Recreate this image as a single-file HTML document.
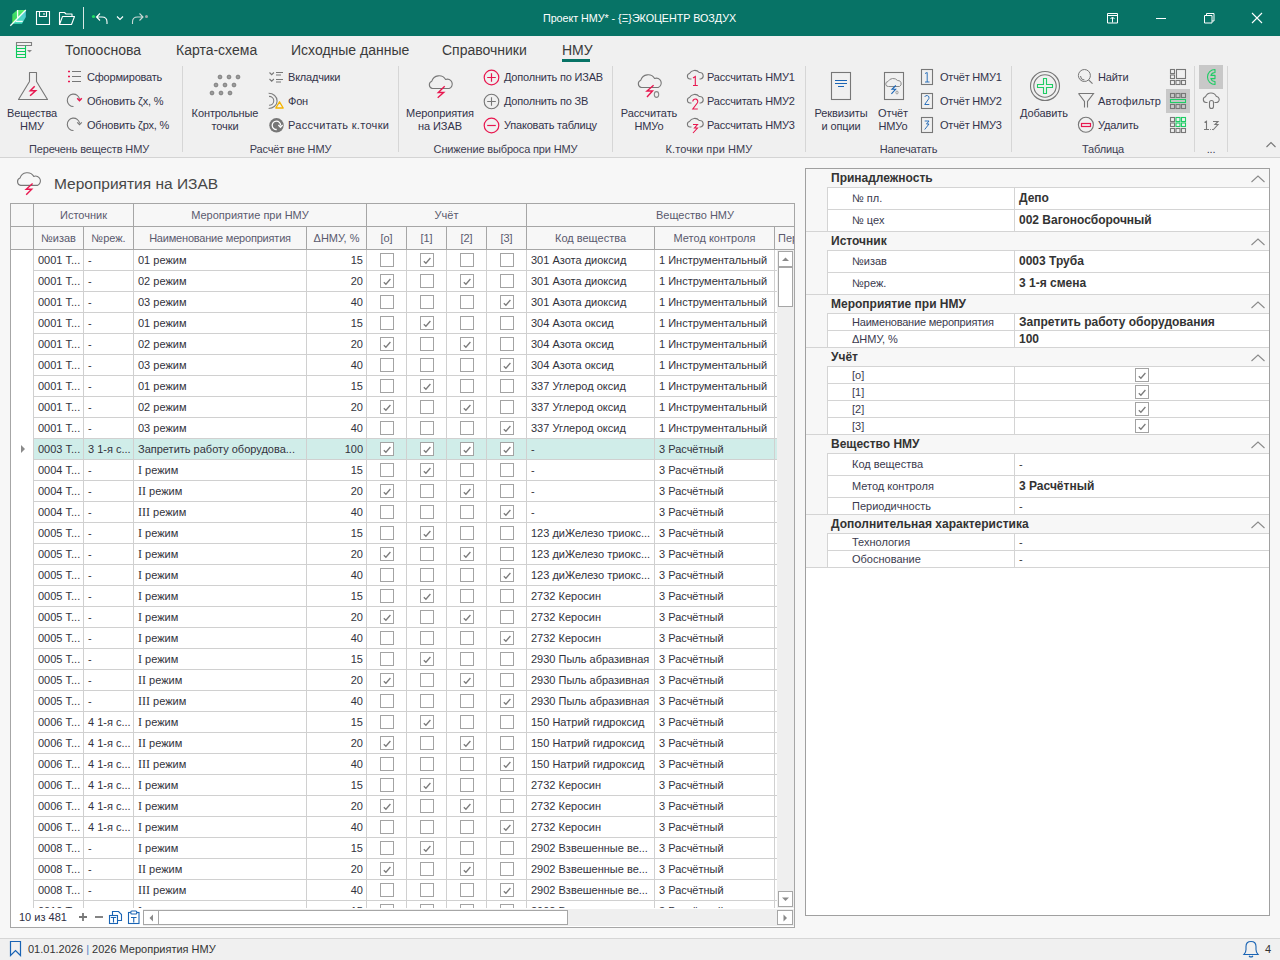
<!DOCTYPE html>
<html><head><meta charset="utf-8">
<style>
*{box-sizing:border-box;margin:0;padding:0}
html,body{width:1280px;height:960px;overflow:hidden}
body{position:relative;background:#f7f7f7;font-family:"Liberation Sans",sans-serif;font-size:11px;color:#333}
.a{position:absolute;white-space:nowrap}
#tb{position:absolute;left:0;top:0;width:1280px;height:36px;background:#077366}
#rib{position:absolute;left:0;top:36px;width:1280px;height:122px;background:#f0f0f0;border-bottom:1px solid #d4d4d4}
.tab{position:absolute;top:6px;font-size:14px;color:#3b3b3b}
.sep{position:absolute;top:30px;width:1px;height:86px;background:#d6d6d6}
.cap{position:absolute;top:107px;color:#3c3c50;text-align:center;letter-spacing:-0.15px}
.sb{position:absolute;color:#33334a;letter-spacing:-0.2px}
.lb{position:absolute;color:#33334a;text-align:center;line-height:13px;letter-spacing:-0.1px}
svg{position:absolute;overflow:visible}
</style></head><body>
<div id="tb">
<svg style="left:0;top:0" width="160" height="36" viewBox="0 0 160 36">
 <defs><linearGradient id="lg" x1="0" y1="1" x2="0.6" y2="0"><stop offset="0" stop-color="#5ee23a"/><stop offset="0.5" stop-color="#3ad968"/><stop offset="1" stop-color="#56ee6a"/></linearGradient><linearGradient id="lg2" x1="0" y1="1" x2="1" y2="0"><stop offset="0" stop-color="#46e8b8"/><stop offset="1" stop-color="#55c8d8"/></linearGradient></defs>
 <polygon points="12.3,14.3 17.3,10 25.8,10 12.3,23.6" fill="url(#lg)"/>
 <polygon points="25.8,10 25.8,17 22,23.8 12.6,23.8" fill="url(#lg2)"/>
 <path d="M10.3 25.7 L25.8 10 M17.6 10 V17.8 M15.8 21.4 H22.7" stroke="#f4fff8" stroke-width="1.3" fill="none"/>
 <path d="M36.5 11.5 h13 v13 h-13 z M39.5 11.5 v5 h7 v-5 M44 13 v2" stroke="#fff" stroke-width="1.1" fill="none"/>
 <path d="M59.5 24.5 v-12 h5 l1.5 1.5 h6 v2 M59.5 24.5 l3 -8 h12 l-3 8 z" stroke="#fff" stroke-width="1.1" fill="none" stroke-linejoin="round"/>
 <path d="M83.5 7 v22" stroke="#d8e8e4" stroke-width="1"/>
 <circle cx="93.5" cy="16.5" r="1.6" fill="#22dd66"/>
 <path d="M107 24 v-2 q0 -5 -5 -5 h-5 M100 13.5 l-3.5 3.5 l3.5 3.5" stroke="#fff" stroke-width="1.1" fill="none"/>
 <path d="M117 16.5 l3 3 l3 -3" stroke="#fff" stroke-width="1.1" fill="none"/>
 <path d="M132.5 24 v-2 q0 -5 5 -5 h5 M139.5 13.5 l3.5 3.5 l-3.5 3.5" stroke="#c9d9d6" stroke-width="1.1" fill="none"/>
 <circle cx="146.5" cy="16.5" r="1.5" fill="#a0acaa"/>
</svg>
<div class="a" style="left:543px;top:12px;font-size:10.8px;letter-spacing:-0.08px;color:#fff">Проект НМУ* - {Ξ}ЭКОЦЕНТР ВОЗДУХ</div>
<svg style="left:1100px;top:0" width="180" height="36" viewBox="1100 0 180 36">
 <path d="M1107.5 13.5 h10 v9.5 h-10 z M1107.5 15.5 h10 M1112.5 22.5 v-5 M1110.5 19 l2 -2 l2 2" stroke="#fff" stroke-width="1" fill="none"/>
 <path d="M1156 18.5 h10" stroke="#fff" stroke-width="1"/>
 <path d="M1204.5 15.5 h7.5 v7.5 h-7.5 z M1206.5 15.5 v-2 h7.5 v7.5 h-2" stroke="#fff" stroke-width="1" fill="none"/>
 <path d="M1252 13 l10 10 M1262 13 l-10 10" stroke="#fff" stroke-width="1.1"/>
</svg>
</div>
<div id="rib">
<svg style="left:0;top:0" width="40" height="30" viewBox="0 36 40 30">
 <path d="M16.5 42.5 h15 v3 h-15 z" stroke="#808080" fill="none" stroke-width="1.1"/>
 <path d="M16.5 45.5 V57.5 H25.5 V45.5 M16.5 48.5 H25.5 M16.5 51.5 H25.5 M16.5 54.5 H25.5" stroke="#0ccb5c" fill="none" stroke-width="1.1"/>
 <path d="M27 50 h5 l-2.5 2.5 z" fill="#8a8a8a"/>
</svg>
<div class="tab" style="left:65px">Топооснова</div>
<div class="tab" style="left:176px">Карта-схема</div>
<div class="tab" style="left:291px">Исходные данные</div>
<div class="tab" style="left:442px">Справочники</div>
<div class="tab" style="left:562px">НМУ</div>
<div class="a" style="left:562px;top:23px;width:28px;height:3px;background:#077366"></div>

<div class="sep" style="left:182px"></div>
<div class="sep" style="left:398px"></div>
<div class="sep" style="left:612px"></div>
<div class="sep" style="left:805px"></div>
<div class="sep" style="left:1011px"></div>
<div class="sep" style="left:1194px"></div>
<div class="sep" style="left:1227px"></div>

<!-- group 1 -->
<div class="lb" style="left:2px;top:71px;width:60px">Вещества<br>НМУ</div>
<div class="sb" style="left:87px;top:35px">Сформировать</div>
<div class="sb" style="left:87px;top:59px">Обновить ζх, %</div>
<div class="sb" style="left:87px;top:83px">Обновить ζрх, %</div>
<div class="cap" style="left:-2px;width:182px">Перечень веществ НМУ</div>
<!-- group 2 -->
<div class="lb" style="left:185px;top:71px;width:80px">Контрольные<br>точки</div>
<div class="sb" style="left:288px;top:35px">Вкладчики</div>
<div class="sb" style="left:288px;top:59px">Фон</div>
<div class="sb" style="left:288px;top:83px;letter-spacing:0.3px">Рассчитать к.точки</div>
<div class="cap" style="left:183px;width:215px">Расчёт вне НМУ</div>
<!-- group 3 -->
<div class="lb" style="left:400px;top:71px;width:80px">Мероприятия<br>на ИЗАВ</div>
<div class="sb" style="left:504px;top:35px">Дополнить по ИЗАВ</div>
<div class="sb" style="left:504px;top:59px">Дополнить по ЗВ</div>
<div class="sb" style="left:504px;top:83px">Упаковать таблицу</div>
<div class="cap" style="left:399px;width:213px">Снижение выброса при НМУ</div>
<!-- group 4 -->
<div class="lb" style="left:609px;top:71px;width:80px">Рассчитать<br>НМУо</div>
<div class="sb" style="left:707px;top:35px">Рассчитать НМУ1</div>
<div class="sb" style="left:707px;top:59px">Рассчитать НМУ2</div>
<div class="sb" style="left:707px;top:83px">Рассчитать НМУ3</div>
<div class="cap" style="left:613px;width:192px;letter-spacing:0.1px">К.точки при НМУ</div>
<!-- group 5 -->
<div class="lb" style="left:806px;top:71px;width:70px">Реквизиты<br>и опции</div>
<div class="lb" style="left:873px;top:71px;width:40px">Отчёт<br>НМУо</div>
<div class="sb" style="left:940px;top:35px">Отчёт НМУ1</div>
<div class="sb" style="left:940px;top:59px">Отчёт НМУ2</div>
<div class="sb" style="left:940px;top:83px">Отчёт НМУ3</div>
<div class="cap" style="left:806px;width:205px">Напечатать</div>
<!-- group 6 -->
<div class="lb" style="left:1014px;top:71px;width:60px">Добавить</div>
<div class="sb" style="left:1098px;top:35px">Найти</div>
<div class="sb" style="left:1098px;top:59px;letter-spacing:0.15px">Автофильтр</div>
<div class="sb" style="left:1098px;top:83px">Удалить</div>
<div class="cap" style="left:1012px;width:182px">Таблица</div>
<!-- group 7 -->
<div class="cap" style="left:1195px;width:32px">...</div>
</div>
<svg style="left:0;top:0" width="1280" height="160" viewBox="0 0 1280 160" fill="none" stroke-width="1">
<g stroke="#777">
 <!-- flask -->
 <path d="M29.5 81.5 V72.5 H36.5 V81.5 L47.5 99.5 H18.5 L29.5 81.5" stroke-width="1.1" stroke-linejoin="round"/>
 <!-- list -->
 <path d="M72 71.5 h9 M72 76.5 h9 M72 81.5 h9" stroke-width="1.1"/>
 <!-- refresh arcs -->
 <path d="M73.5 106.5 A6.2 6.2 0 1 1 79.6 99.3" stroke-width="1.1"/>
 <path d="M73.5 130.5 A6.2 6.2 0 1 1 79.6 123.3" stroke-width="1.1"/>
 <path d="M77.2 122.3 L79.5 124.6 L81.8 122.3" stroke-width="1.1"/>
 <!-- vkladchiki -->
 <path d="M269.5 72.5 l2.2 2.2 l2.2 -2.2 M269.5 79 l2.2 2.2 l2.2 -2.2 M276 72.5 h7 M276 75 h5 M276 79.5 h7 M276 82 h5" stroke-width="1.1"/>
 <!-- fon moon -->
 <path d="M268.6 93.3 A8.5 7.6 0 0 1 268.6 108.5" stroke="#7f7f7f" stroke-width="1.1"/>
 <path d="M269 96.4 A4.7 4.4 0 0 1 269 105.3" stroke="#7f7f7f" stroke-width="1.1"/>
 <!-- search -->
 <circle cx="1084.4" cy="75.5" r="6"/>
 <path d="M1080.5 76 a4 4 0 0 0 4 4" />
 <path d="M1088.6 79.8 L1092.5 83.6" stroke-width="1.1"/>
 <!-- funnel -->
 <path d="M1078.5 93.5 H1093.5 L1087.5 101.5 V107.5 M1084.5 107.5 V101.5 L1078.5 93.5" stroke-width="1.1"/>
 <!-- delete circle -->
 <circle cx="1085.9" cy="124.8" r="7.5" stroke-width="1.1"/>
 <!-- add circles -->
 <circle cx="1045" cy="86" r="14.5" stroke-width="1.1"/>
 <circle cx="1045" cy="86" r="11.2" stroke-width="1.1"/>
 <!-- plus circles gray -->
 <circle cx="491.5" cy="101.5" r="7.3" stroke-width="1.1"/>
 <path d="M487.2 101.5 h8.6 M491.5 97.2 v8.6" stroke-width="1.1"/>
 <!-- clouds -->
 <path d="M432.5 88.5 A3.8 3.8 0 0 1 431.8 81.2 A7.6 7.6 0 0 1 445.6 79.5 A4.6 4.6 0 0 1 449.2 88.5 Z" stroke-width="1.1" stroke-linejoin="round"/>
 <path d="M641.5 87.5 A3.8 3.8 0 0 1 640.8 80.2 A7.6 7.6 0 0 1 654.6 78.5 A4.6 4.6 0 0 1 658.2 87.5 Z" stroke-width="1.1" stroke-linejoin="round"/>
 <ellipse cx="656.5" cy="94.5" rx="2.2" ry="2.9" stroke="#888" stroke-width="1.1"/>
 <!-- small clouds x3 -->
 <path d="M691.5 79 h-1.5 A2.8 2.8 0 0 1 689.5 73.5 A5.9 5.9 0 0 1 699.2 72.5 A3.3 3.3 0 0 1 700.5 79 h-1" stroke-width="1.1"/>
 <path d="M691.5 103 h-1.5 A2.8 2.8 0 0 1 689.5 97.5 A5.9 5.9 0 0 1 699.2 96.5 A3.3 3.3 0 0 1 700.5 103 h-1" stroke-width="1.1"/>
 <path d="M691.5 127 h-1.5 A2.8 2.8 0 0 1 689.5 121.5 A5.9 5.9 0 0 1 699.2 120.5 A3.3 3.3 0 0 1 700.5 127 h-1" stroke-width="1.1"/>
 <!-- doc icons -->
 <rect x="831.5" y="72.5" width="19" height="27" stroke-width="1.1"/>
 <rect x="884.5" y="72.5" width="19" height="27" stroke-width="1.1"/>
 <path d="M888.5 86.5 A2.5 2.5 0 0 1 888 81.5 A5.9 5.9 0 0 1 897.6 80.5 A3.2 3.2 0 0 1 899.5 86.5 Z" stroke="#8a8a8a" stroke-width="1"/>
 <rect x="921.5" y="69.5" width="11" height="15" stroke-width="1.1"/>
 <rect x="921.5" y="93.5" width="11" height="15" stroke-width="1.1"/>
 <rect x="921.5" y="117.5" width="11" height="15" stroke-width="1.1"/>
</g>
<g fill="#9a9a9a" stroke="#7a7a7a" stroke-width="0.9">
 <circle cx="220" cy="77" r="1.9"/><circle cx="229" cy="77" r="1.9"/><circle cx="238" cy="77" r="1.9"/>
 <circle cx="216" cy="85" r="1.9"/><circle cx="225" cy="85" r="1.9"/><circle cx="234" cy="85" r="1.9"/>
 <circle cx="212" cy="93" r="1.9"/><circle cx="221" cy="93" r="1.9"/><circle cx="230" cy="93" r="1.9"/>
</g>
<g fill="#777">
 <circle cx="276.5" cy="125.3" r="7.2"/>
</g>
<path d="M276.7 129.5 A4.2 4.2 0 1 1 280.6 125.4" stroke="#fff" stroke-width="1.3"/>
<path d="M278.4 125 L280.5 127.2 L282.6 125" stroke="#fff" stroke-width="1.3"/>
<g stroke="#e8174f">
 <path d="M34.7 86.3 L30.3 90.7 H35.6 L30.1 95.7" stroke-width="1.5"/>
 <path d="M68 71.5 h2 M68 76.5 h2 M68 81.5 h2" stroke-width="1.5"/>
 <path d="M77.2 98.3 L79.5 100.6 L81.8 98.3" stroke-width="1.5"/>
 <circle cx="491.5" cy="77.5" r="7.3" stroke-width="1.2"/>
 <path d="M487.2 77.5 h8.6 M491.5 73.2 v8.6" stroke-width="1.2"/>
 <circle cx="491.5" cy="125.5" r="7.3" stroke-width="1.2"/>
 <path d="M487.2 125.5 h8.6" stroke-width="1.2"/>
 <path d="M444.7 86.3 L438.3 92.5 H443.7 L437.7 97.8" stroke-width="1.4"/>
 <path d="M653.6 85.3 L647 91 H652.5 L647 97" stroke-width="1.4"/>
 <path d="M693 78 l2.3 -1.5 v8.5 M693 85.5 h4.8" stroke-width="1.1"/>
 <path d="M692.8 101.5 a2.5 2.5 0 1 1 4.5 1.5 l-4.5 6 h5" stroke-width="1.1"/>
 <path d="M693 124.5 h4.5 l-3 3.5 h3 l-4.5 5" stroke-width="1.1"/>
 <rect x="1081.5" y="123.5" width="9" height="3" stroke-width="1.2"/>
</g>
<path d="M275.8 108 L279.5 101.8 L283.2 108 Z" stroke="#f5b400" stroke-width="1.3" stroke-linejoin="round"/>
<g stroke="#1a64b4">
 <path d="M835 80.5 h12 M835 83.5 h12 M838 86.5 h6" stroke-width="1.1"/>
 <path d="M895.8 85.5 l-3.8 3.8 h3.6 l-4.2 4.6" stroke-width="1.1"/>
 <ellipse cx="897" cy="92.5" rx="1.1" ry="1.5" stroke="#888" stroke-width="0.8"/>
 <path d="M925 73.5 l2.2 -1 v9.5 M925 82 h4.5" stroke-width="0.9"/>
 <path d="M924.7 97 a2.2 2.2 0 1 1 4.2 1.5 l-4.2 6 h4.6" stroke-width="0.9"/>
 <path d="M924.7 121 h4.3 l-2.5 3 h2.5 l-4.3 5.5" stroke-width="0.9"/>
</g>
<!-- add plus green -->
<path d="M1043.5 78.5 h3 v6 h6 v3 h-6 v6 h-3 v-6 h-6 v-3 h6 z" stroke="#1fcc64" stroke-width="1.1"/>
<!-- table right icons -->
<rect x="1166" y="89" width="24" height="24" fill="#c8c8c8"/>
<rect x="1199" y="65" width="24" height="24" fill="#c8c8c8"/>
<g stroke="#777" stroke-width="1.1">
 <rect x="1170.5" y="69.5" width="4" height="4"/><rect x="1170.5" y="75" width="4" height="3.5"/>
 <rect x="1176.5" y="69.5" width="9" height="9"/>
 <rect x="1170.5" y="80.5" width="4" height="4"/><rect x="1176" y="80.5" width="4" height="4"/><rect x="1181.5" y="80.5" width="4" height="4"/>
 <rect x="1170.5" y="93.5" width="4" height="4"/><rect x="1176" y="93.5" width="4" height="4"/><rect x="1181.5" y="93.5" width="4" height="4"/>
 <rect x="1170.5" y="104.5" width="4" height="4"/><rect x="1176" y="104.5" width="4" height="4"/><rect x="1181.5" y="104.5" width="4" height="4"/>
 <rect x="1170.5" y="117.5" width="4" height="4"/><rect x="1170.5" y="123" width="4" height="3.5"/>
 <rect x="1170.5" y="128.5" width="4" height="4"/><rect x="1176" y="128.5" width="4" height="4"/><rect x="1181.5" y="128.5" width="4" height="4"/>
 <rect x="1209.5" y="100.5" width="4" height="8" rx="2"/>
 <path d="M1207.5 102.5 h-1.5 A2.9 2.9 0 0 1 1205.5 96.8 A5.9 5.9 0 0 1 1216.4 96.5 A3 3 0 0 1 1216 102.5 h-1.5"/>
 <path d="M1204.5 122.5 l2 -1.2 v8 M1204 129.5 h5 M1210.2 129.5 h0.8 M1212 129.5 h0.8 M1213 121.5 h5 l-3 3 h3 l-5 5.5"/>
</g>
<g stroke="#1fcc64" stroke-width="1.1">
 <rect x="1170.5" y="99.5" width="15" height="3"/>
 <rect x="1176" y="117.5" width="4" height="4"/><rect x="1181.5" y="117.5" width="4" height="4"/>
 <rect x="1176" y="123" width="4" height="3.5"/><rect x="1181.5" y="123" width="4" height="3.5"/>
 <path d="M1215 69.5 A7.5 7.5 0 0 0 1215 84.5 V81.5 A4.5 4.5 0 0 1 1210.9 78.6 H1215 V75.4 H1210.9 A4.5 4.5 0 0 1 1215 72.5 Z" stroke-linejoin="round"/>
</g>
<path d="M1266.5 147 L1271 142.5 L1275.5 147" stroke="#777" stroke-width="1.1"/>
</svg>
<div class="a" style="left:10px;top:203px;width:785px;height:47px;background:#f7f7f7;border:1px solid #a6a6a6;border-bottom:none"></div>
<div class="a" style="left:11px;top:250px;width:783px;height:677px;background:#fff"></div>
<div class="a" style="left:10px;top:203px;width:785px;height:725px;border:1px solid #a6a6a6"></div>
<div class="a" style="left:11px;top:226px;width:783px;height:1px;background:#a6a6a6"></div>
<div class="a" style="left:11px;top:249px;width:783px;height:1px;background:#a6a6a6"></div>
<div class="a" style="left:33px;top:204px;width:1px;height:45px;background:#a6a6a6"></div>
<div class="a" style="left:133px;top:204px;width:1px;height:45px;background:#a6a6a6"></div>
<div class="a" style="left:366px;top:204px;width:1px;height:45px;background:#a6a6a6"></div>
<div class="a" style="left:526px;top:204px;width:1px;height:45px;background:#a6a6a6"></div>
<div class="a" style="left:83px;top:227px;width:1px;height:22px;background:#a6a6a6"></div>
<div class="a" style="left:306px;top:227px;width:1px;height:22px;background:#a6a6a6"></div>
<div class="a" style="left:406px;top:227px;width:1px;height:22px;background:#a6a6a6"></div>
<div class="a" style="left:446px;top:227px;width:1px;height:22px;background:#a6a6a6"></div>
<div class="a" style="left:486px;top:227px;width:1px;height:22px;background:#a6a6a6"></div>
<div class="a" style="left:654px;top:227px;width:1px;height:22px;background:#a6a6a6"></div>
<div class="a" style="left:774px;top:227px;width:1px;height:22px;background:#a6a6a6"></div>
<div class="a" style="left:34px;top:204px;width:99px;color:#5a5a6e;text-align:center;line-height:22px">Источник</div>
<div class="a" style="left:134px;top:204px;width:232px;color:#5a5a6e;text-align:center;line-height:22px">Мероприятие при НМУ</div>
<div class="a" style="left:367px;top:204px;width:159px;color:#5a5a6e;text-align:center;line-height:22px">Учёт</div>
<div class="a" style="left:595px;top:204px;width:200px;color:#5a5a6e;text-align:center;line-height:22px">Вещество НМУ</div>
<div class="a" style="left:34px;top:227px;width:49px;color:#5a5a6e;text-align:center;line-height:22px">№изав</div>
<div class="a" style="left:84px;top:227px;width:49px;color:#5a5a6e;text-align:center;line-height:22px">№реж.</div>
<div class="a" style="left:134px;top:227px;width:172px;letter-spacing:-0.2px;color:#5a5a6e;text-align:center;line-height:22px">Наименование мероприятия</div>
<div class="a" style="left:307px;top:227px;width:59px;color:#5a5a6e;text-align:center;line-height:22px">ΔНМУ, %</div>
<div class="a" style="left:367px;top:227px;width:39px;color:#5a5a6e;text-align:center;line-height:22px">[o]</div>
<div class="a" style="left:407px;top:227px;width:39px;color:#5a5a6e;text-align:center;line-height:22px">[1]</div>
<div class="a" style="left:447px;top:227px;width:39px;color:#5a5a6e;text-align:center;line-height:22px">[2]</div>
<div class="a" style="left:487px;top:227px;width:39px;color:#5a5a6e;text-align:center;line-height:22px">[3]</div>
<div class="a" style="left:527px;top:227px;width:127px;color:#5a5a6e;text-align:center;line-height:22px">Код вещества</div>
<div class="a" style="left:655px;top:227px;width:119px;color:#5a5a6e;text-align:center;line-height:22px">Метод контроля</div>
<div class="a" style="left:778px;top:227px;width:16px;overflow:hidden;color:#5a5a6e;text-align:center;line-height:22px;text-align:left">Пер</div>
<div class="a" style="left:11px;top:250px;width:766px;height:658px;overflow:hidden">
<div class="a" style="left:23px;top:20px;width:743px;height:1px;background:#d0d0d0"></div>
<div class="a" style="left:27px;top:0px;color:#32323c;line-height:20px">0001 Т...</div>
<div class="a" style="left:77px;top:0px;color:#32323c;line-height:20px">-</div>
<div class="a" style="left:127px;top:0px;color:#32323c;line-height:20px">01 режим</div>
<div class="a" style="left:296px;top:0px;width:56px;text-align:right;color:#32323c;line-height:20px">15</div>
<svg style="left:369px;top:3px" width="14" height="14" viewBox="0 0 14 14"><rect x="0.5" y="0.5" width="13" height="13" fill="#fff" stroke="#a3a3a3"/></svg>
<svg style="left:409px;top:3px" width="14" height="14" viewBox="0 0 14 14"><rect x="0.5" y="0.5" width="13" height="13" fill="#fff" stroke="#a3a3a3"/><path d="M3.8 8.2 L5.9 10.2 L10.4 5" stroke="#7c7c7c" stroke-width="1.3" fill="none"/></svg>
<svg style="left:449px;top:3px" width="14" height="14" viewBox="0 0 14 14"><rect x="0.5" y="0.5" width="13" height="13" fill="#fff" stroke="#a3a3a3"/></svg>
<svg style="left:489px;top:3px" width="14" height="14" viewBox="0 0 14 14"><rect x="0.5" y="0.5" width="13" height="13" fill="#fff" stroke="#a3a3a3"/></svg>
<div class="a" style="left:520px;top:0px;color:#32323c;line-height:20px">301 Азота диоксид</div>
<div class="a" style="left:648px;top:0px;color:#32323c;line-height:20px">1 Инструментальный</div>
<div class="a" style="left:23px;top:41px;width:743px;height:1px;background:#d0d0d0"></div>
<div class="a" style="left:27px;top:21px;color:#32323c;line-height:20px">0001 Т...</div>
<div class="a" style="left:77px;top:21px;color:#32323c;line-height:20px">-</div>
<div class="a" style="left:127px;top:21px;color:#32323c;line-height:20px">02 режим</div>
<div class="a" style="left:296px;top:21px;width:56px;text-align:right;color:#32323c;line-height:20px">20</div>
<svg style="left:369px;top:24px" width="14" height="14" viewBox="0 0 14 14"><rect x="0.5" y="0.5" width="13" height="13" fill="#fff" stroke="#a3a3a3"/><path d="M3.8 8.2 L5.9 10.2 L10.4 5" stroke="#7c7c7c" stroke-width="1.3" fill="none"/></svg>
<svg style="left:409px;top:24px" width="14" height="14" viewBox="0 0 14 14"><rect x="0.5" y="0.5" width="13" height="13" fill="#fff" stroke="#a3a3a3"/></svg>
<svg style="left:449px;top:24px" width="14" height="14" viewBox="0 0 14 14"><rect x="0.5" y="0.5" width="13" height="13" fill="#fff" stroke="#a3a3a3"/><path d="M3.8 8.2 L5.9 10.2 L10.4 5" stroke="#7c7c7c" stroke-width="1.3" fill="none"/></svg>
<svg style="left:489px;top:24px" width="14" height="14" viewBox="0 0 14 14"><rect x="0.5" y="0.5" width="13" height="13" fill="#fff" stroke="#a3a3a3"/></svg>
<div class="a" style="left:520px;top:21px;color:#32323c;line-height:20px">301 Азота диоксид</div>
<div class="a" style="left:648px;top:21px;color:#32323c;line-height:20px">1 Инструментальный</div>
<div class="a" style="left:23px;top:62px;width:743px;height:1px;background:#d0d0d0"></div>
<div class="a" style="left:27px;top:42px;color:#32323c;line-height:20px">0001 Т...</div>
<div class="a" style="left:77px;top:42px;color:#32323c;line-height:20px">-</div>
<div class="a" style="left:127px;top:42px;color:#32323c;line-height:20px">03 режим</div>
<div class="a" style="left:296px;top:42px;width:56px;text-align:right;color:#32323c;line-height:20px">40</div>
<svg style="left:369px;top:45px" width="14" height="14" viewBox="0 0 14 14"><rect x="0.5" y="0.5" width="13" height="13" fill="#fff" stroke="#a3a3a3"/></svg>
<svg style="left:409px;top:45px" width="14" height="14" viewBox="0 0 14 14"><rect x="0.5" y="0.5" width="13" height="13" fill="#fff" stroke="#a3a3a3"/></svg>
<svg style="left:449px;top:45px" width="14" height="14" viewBox="0 0 14 14"><rect x="0.5" y="0.5" width="13" height="13" fill="#fff" stroke="#a3a3a3"/></svg>
<svg style="left:489px;top:45px" width="14" height="14" viewBox="0 0 14 14"><rect x="0.5" y="0.5" width="13" height="13" fill="#fff" stroke="#a3a3a3"/><path d="M3.8 8.2 L5.9 10.2 L10.4 5" stroke="#7c7c7c" stroke-width="1.3" fill="none"/></svg>
<div class="a" style="left:520px;top:42px;color:#32323c;line-height:20px">301 Азота диоксид</div>
<div class="a" style="left:648px;top:42px;color:#32323c;line-height:20px">1 Инструментальный</div>
<div class="a" style="left:23px;top:83px;width:743px;height:1px;background:#d0d0d0"></div>
<div class="a" style="left:27px;top:63px;color:#32323c;line-height:20px">0001 Т...</div>
<div class="a" style="left:77px;top:63px;color:#32323c;line-height:20px">-</div>
<div class="a" style="left:127px;top:63px;color:#32323c;line-height:20px">01 режим</div>
<div class="a" style="left:296px;top:63px;width:56px;text-align:right;color:#32323c;line-height:20px">15</div>
<svg style="left:369px;top:66px" width="14" height="14" viewBox="0 0 14 14"><rect x="0.5" y="0.5" width="13" height="13" fill="#fff" stroke="#a3a3a3"/></svg>
<svg style="left:409px;top:66px" width="14" height="14" viewBox="0 0 14 14"><rect x="0.5" y="0.5" width="13" height="13" fill="#fff" stroke="#a3a3a3"/><path d="M3.8 8.2 L5.9 10.2 L10.4 5" stroke="#7c7c7c" stroke-width="1.3" fill="none"/></svg>
<svg style="left:449px;top:66px" width="14" height="14" viewBox="0 0 14 14"><rect x="0.5" y="0.5" width="13" height="13" fill="#fff" stroke="#a3a3a3"/></svg>
<svg style="left:489px;top:66px" width="14" height="14" viewBox="0 0 14 14"><rect x="0.5" y="0.5" width="13" height="13" fill="#fff" stroke="#a3a3a3"/></svg>
<div class="a" style="left:520px;top:63px;color:#32323c;line-height:20px">304 Азота оксид</div>
<div class="a" style="left:648px;top:63px;color:#32323c;line-height:20px">1 Инструментальный</div>
<div class="a" style="left:23px;top:104px;width:743px;height:1px;background:#d0d0d0"></div>
<div class="a" style="left:27px;top:84px;color:#32323c;line-height:20px">0001 Т...</div>
<div class="a" style="left:77px;top:84px;color:#32323c;line-height:20px">-</div>
<div class="a" style="left:127px;top:84px;color:#32323c;line-height:20px">02 режим</div>
<div class="a" style="left:296px;top:84px;width:56px;text-align:right;color:#32323c;line-height:20px">20</div>
<svg style="left:369px;top:87px" width="14" height="14" viewBox="0 0 14 14"><rect x="0.5" y="0.5" width="13" height="13" fill="#fff" stroke="#a3a3a3"/><path d="M3.8 8.2 L5.9 10.2 L10.4 5" stroke="#7c7c7c" stroke-width="1.3" fill="none"/></svg>
<svg style="left:409px;top:87px" width="14" height="14" viewBox="0 0 14 14"><rect x="0.5" y="0.5" width="13" height="13" fill="#fff" stroke="#a3a3a3"/></svg>
<svg style="left:449px;top:87px" width="14" height="14" viewBox="0 0 14 14"><rect x="0.5" y="0.5" width="13" height="13" fill="#fff" stroke="#a3a3a3"/><path d="M3.8 8.2 L5.9 10.2 L10.4 5" stroke="#7c7c7c" stroke-width="1.3" fill="none"/></svg>
<svg style="left:489px;top:87px" width="14" height="14" viewBox="0 0 14 14"><rect x="0.5" y="0.5" width="13" height="13" fill="#fff" stroke="#a3a3a3"/></svg>
<div class="a" style="left:520px;top:84px;color:#32323c;line-height:20px">304 Азота оксид</div>
<div class="a" style="left:648px;top:84px;color:#32323c;line-height:20px">1 Инструментальный</div>
<div class="a" style="left:23px;top:125px;width:743px;height:1px;background:#d0d0d0"></div>
<div class="a" style="left:27px;top:105px;color:#32323c;line-height:20px">0001 Т...</div>
<div class="a" style="left:77px;top:105px;color:#32323c;line-height:20px">-</div>
<div class="a" style="left:127px;top:105px;color:#32323c;line-height:20px">03 режим</div>
<div class="a" style="left:296px;top:105px;width:56px;text-align:right;color:#32323c;line-height:20px">40</div>
<svg style="left:369px;top:108px" width="14" height="14" viewBox="0 0 14 14"><rect x="0.5" y="0.5" width="13" height="13" fill="#fff" stroke="#a3a3a3"/></svg>
<svg style="left:409px;top:108px" width="14" height="14" viewBox="0 0 14 14"><rect x="0.5" y="0.5" width="13" height="13" fill="#fff" stroke="#a3a3a3"/></svg>
<svg style="left:449px;top:108px" width="14" height="14" viewBox="0 0 14 14"><rect x="0.5" y="0.5" width="13" height="13" fill="#fff" stroke="#a3a3a3"/></svg>
<svg style="left:489px;top:108px" width="14" height="14" viewBox="0 0 14 14"><rect x="0.5" y="0.5" width="13" height="13" fill="#fff" stroke="#a3a3a3"/><path d="M3.8 8.2 L5.9 10.2 L10.4 5" stroke="#7c7c7c" stroke-width="1.3" fill="none"/></svg>
<div class="a" style="left:520px;top:105px;color:#32323c;line-height:20px">304 Азота оксид</div>
<div class="a" style="left:648px;top:105px;color:#32323c;line-height:20px">1 Инструментальный</div>
<div class="a" style="left:23px;top:146px;width:743px;height:1px;background:#d0d0d0"></div>
<div class="a" style="left:27px;top:126px;color:#32323c;line-height:20px">0001 Т...</div>
<div class="a" style="left:77px;top:126px;color:#32323c;line-height:20px">-</div>
<div class="a" style="left:127px;top:126px;color:#32323c;line-height:20px">01 режим</div>
<div class="a" style="left:296px;top:126px;width:56px;text-align:right;color:#32323c;line-height:20px">15</div>
<svg style="left:369px;top:129px" width="14" height="14" viewBox="0 0 14 14"><rect x="0.5" y="0.5" width="13" height="13" fill="#fff" stroke="#a3a3a3"/></svg>
<svg style="left:409px;top:129px" width="14" height="14" viewBox="0 0 14 14"><rect x="0.5" y="0.5" width="13" height="13" fill="#fff" stroke="#a3a3a3"/><path d="M3.8 8.2 L5.9 10.2 L10.4 5" stroke="#7c7c7c" stroke-width="1.3" fill="none"/></svg>
<svg style="left:449px;top:129px" width="14" height="14" viewBox="0 0 14 14"><rect x="0.5" y="0.5" width="13" height="13" fill="#fff" stroke="#a3a3a3"/></svg>
<svg style="left:489px;top:129px" width="14" height="14" viewBox="0 0 14 14"><rect x="0.5" y="0.5" width="13" height="13" fill="#fff" stroke="#a3a3a3"/></svg>
<div class="a" style="left:520px;top:126px;color:#32323c;line-height:20px">337 Углерод оксид</div>
<div class="a" style="left:648px;top:126px;color:#32323c;line-height:20px">1 Инструментальный</div>
<div class="a" style="left:23px;top:167px;width:743px;height:1px;background:#d0d0d0"></div>
<div class="a" style="left:27px;top:147px;color:#32323c;line-height:20px">0001 Т...</div>
<div class="a" style="left:77px;top:147px;color:#32323c;line-height:20px">-</div>
<div class="a" style="left:127px;top:147px;color:#32323c;line-height:20px">02 режим</div>
<div class="a" style="left:296px;top:147px;width:56px;text-align:right;color:#32323c;line-height:20px">20</div>
<svg style="left:369px;top:150px" width="14" height="14" viewBox="0 0 14 14"><rect x="0.5" y="0.5" width="13" height="13" fill="#fff" stroke="#a3a3a3"/><path d="M3.8 8.2 L5.9 10.2 L10.4 5" stroke="#7c7c7c" stroke-width="1.3" fill="none"/></svg>
<svg style="left:409px;top:150px" width="14" height="14" viewBox="0 0 14 14"><rect x="0.5" y="0.5" width="13" height="13" fill="#fff" stroke="#a3a3a3"/></svg>
<svg style="left:449px;top:150px" width="14" height="14" viewBox="0 0 14 14"><rect x="0.5" y="0.5" width="13" height="13" fill="#fff" stroke="#a3a3a3"/><path d="M3.8 8.2 L5.9 10.2 L10.4 5" stroke="#7c7c7c" stroke-width="1.3" fill="none"/></svg>
<svg style="left:489px;top:150px" width="14" height="14" viewBox="0 0 14 14"><rect x="0.5" y="0.5" width="13" height="13" fill="#fff" stroke="#a3a3a3"/></svg>
<div class="a" style="left:520px;top:147px;color:#32323c;line-height:20px">337 Углерод оксид</div>
<div class="a" style="left:648px;top:147px;color:#32323c;line-height:20px">1 Инструментальный</div>
<div class="a" style="left:23px;top:188px;width:743px;height:1px;background:#d0d0d0"></div>
<div class="a" style="left:27px;top:168px;color:#32323c;line-height:20px">0001 Т...</div>
<div class="a" style="left:77px;top:168px;color:#32323c;line-height:20px">-</div>
<div class="a" style="left:127px;top:168px;color:#32323c;line-height:20px">03 режим</div>
<div class="a" style="left:296px;top:168px;width:56px;text-align:right;color:#32323c;line-height:20px">40</div>
<svg style="left:369px;top:171px" width="14" height="14" viewBox="0 0 14 14"><rect x="0.5" y="0.5" width="13" height="13" fill="#fff" stroke="#a3a3a3"/></svg>
<svg style="left:409px;top:171px" width="14" height="14" viewBox="0 0 14 14"><rect x="0.5" y="0.5" width="13" height="13" fill="#fff" stroke="#a3a3a3"/></svg>
<svg style="left:449px;top:171px" width="14" height="14" viewBox="0 0 14 14"><rect x="0.5" y="0.5" width="13" height="13" fill="#fff" stroke="#a3a3a3"/></svg>
<svg style="left:489px;top:171px" width="14" height="14" viewBox="0 0 14 14"><rect x="0.5" y="0.5" width="13" height="13" fill="#fff" stroke="#a3a3a3"/><path d="M3.8 8.2 L5.9 10.2 L10.4 5" stroke="#7c7c7c" stroke-width="1.3" fill="none"/></svg>
<div class="a" style="left:520px;top:168px;color:#32323c;line-height:20px">337 Углерод оксид</div>
<div class="a" style="left:648px;top:168px;color:#32323c;line-height:20px">1 Инструментальный</div>
<div class="a" style="left:23px;top:189px;width:743px;height:20px;background:#d0ede9"></div>
<svg style="left:9px;top:194px" width="6" height="10" viewBox="0 0 6 10"><path d="M1 1 L5 5 L1 9 Z" fill="#8a8a8a"/></svg>
<div class="a" style="left:23px;top:209px;width:743px;height:1px;background:#d0d0d0"></div>
<div class="a" style="left:27px;top:189px;color:#32323c;line-height:20px">0003 Т...</div>
<div class="a" style="left:77px;top:189px;color:#32323c;line-height:20px">3 1-я с...</div>
<div class="a" style="left:127px;top:189px;color:#32323c;line-height:20px">Запретить работу оборудова...</div>
<div class="a" style="left:296px;top:189px;width:56px;text-align:right;color:#32323c;line-height:20px">100</div>
<svg style="left:369px;top:192px" width="14" height="14" viewBox="0 0 14 14"><rect x="0.5" y="0.5" width="13" height="13" fill="#fff" stroke="#a3a3a3"/><path d="M3.8 8.2 L5.9 10.2 L10.4 5" stroke="#7c7c7c" stroke-width="1.3" fill="none"/></svg>
<svg style="left:409px;top:192px" width="14" height="14" viewBox="0 0 14 14"><rect x="0.5" y="0.5" width="13" height="13" fill="#fff" stroke="#a3a3a3"/><path d="M3.8 8.2 L5.9 10.2 L10.4 5" stroke="#7c7c7c" stroke-width="1.3" fill="none"/></svg>
<svg style="left:449px;top:192px" width="14" height="14" viewBox="0 0 14 14"><rect x="0.5" y="0.5" width="13" height="13" fill="#fff" stroke="#a3a3a3"/><path d="M3.8 8.2 L5.9 10.2 L10.4 5" stroke="#7c7c7c" stroke-width="1.3" fill="none"/></svg>
<svg style="left:489px;top:192px" width="14" height="14" viewBox="0 0 14 14"><rect x="0.5" y="0.5" width="13" height="13" fill="#fff" stroke="#a3a3a3"/><path d="M3.8 8.2 L5.9 10.2 L10.4 5" stroke="#7c7c7c" stroke-width="1.3" fill="none"/></svg>
<div class="a" style="left:520px;top:189px;color:#32323c;line-height:20px">-</div>
<div class="a" style="left:648px;top:189px;color:#32323c;line-height:20px">3 Расчётный</div>
<div class="a" style="left:23px;top:230px;width:743px;height:1px;background:#d0d0d0"></div>
<div class="a" style="left:27px;top:210px;color:#32323c;line-height:20px">0004 Т...</div>
<div class="a" style="left:77px;top:210px;color:#32323c;line-height:20px">-</div>
<div class="a" style="left:127px;top:210px;color:#32323c;line-height:20px"><span style="font-family:'Liberation Serif',serif;font-size:12px">I</span> режим</div>
<div class="a" style="left:296px;top:210px;width:56px;text-align:right;color:#32323c;line-height:20px">15</div>
<svg style="left:369px;top:213px" width="14" height="14" viewBox="0 0 14 14"><rect x="0.5" y="0.5" width="13" height="13" fill="#fff" stroke="#a3a3a3"/></svg>
<svg style="left:409px;top:213px" width="14" height="14" viewBox="0 0 14 14"><rect x="0.5" y="0.5" width="13" height="13" fill="#fff" stroke="#a3a3a3"/><path d="M3.8 8.2 L5.9 10.2 L10.4 5" stroke="#7c7c7c" stroke-width="1.3" fill="none"/></svg>
<svg style="left:449px;top:213px" width="14" height="14" viewBox="0 0 14 14"><rect x="0.5" y="0.5" width="13" height="13" fill="#fff" stroke="#a3a3a3"/></svg>
<svg style="left:489px;top:213px" width="14" height="14" viewBox="0 0 14 14"><rect x="0.5" y="0.5" width="13" height="13" fill="#fff" stroke="#a3a3a3"/></svg>
<div class="a" style="left:520px;top:210px;color:#32323c;line-height:20px">-</div>
<div class="a" style="left:648px;top:210px;color:#32323c;line-height:20px">3 Расчётный</div>
<div class="a" style="left:23px;top:251px;width:743px;height:1px;background:#d0d0d0"></div>
<div class="a" style="left:27px;top:231px;color:#32323c;line-height:20px">0004 Т...</div>
<div class="a" style="left:77px;top:231px;color:#32323c;line-height:20px">-</div>
<div class="a" style="left:127px;top:231px;color:#32323c;line-height:20px"><span style="font-family:'Liberation Serif',serif;font-size:12px">II</span> режим</div>
<div class="a" style="left:296px;top:231px;width:56px;text-align:right;color:#32323c;line-height:20px">20</div>
<svg style="left:369px;top:234px" width="14" height="14" viewBox="0 0 14 14"><rect x="0.5" y="0.5" width="13" height="13" fill="#fff" stroke="#a3a3a3"/><path d="M3.8 8.2 L5.9 10.2 L10.4 5" stroke="#7c7c7c" stroke-width="1.3" fill="none"/></svg>
<svg style="left:409px;top:234px" width="14" height="14" viewBox="0 0 14 14"><rect x="0.5" y="0.5" width="13" height="13" fill="#fff" stroke="#a3a3a3"/></svg>
<svg style="left:449px;top:234px" width="14" height="14" viewBox="0 0 14 14"><rect x="0.5" y="0.5" width="13" height="13" fill="#fff" stroke="#a3a3a3"/><path d="M3.8 8.2 L5.9 10.2 L10.4 5" stroke="#7c7c7c" stroke-width="1.3" fill="none"/></svg>
<svg style="left:489px;top:234px" width="14" height="14" viewBox="0 0 14 14"><rect x="0.5" y="0.5" width="13" height="13" fill="#fff" stroke="#a3a3a3"/></svg>
<div class="a" style="left:520px;top:231px;color:#32323c;line-height:20px">-</div>
<div class="a" style="left:648px;top:231px;color:#32323c;line-height:20px">3 Расчётный</div>
<div class="a" style="left:23px;top:272px;width:743px;height:1px;background:#d0d0d0"></div>
<div class="a" style="left:27px;top:252px;color:#32323c;line-height:20px">0004 Т...</div>
<div class="a" style="left:77px;top:252px;color:#32323c;line-height:20px">-</div>
<div class="a" style="left:127px;top:252px;color:#32323c;line-height:20px"><span style="font-family:'Liberation Serif',serif;font-size:12px">III</span> режим</div>
<div class="a" style="left:296px;top:252px;width:56px;text-align:right;color:#32323c;line-height:20px">40</div>
<svg style="left:369px;top:255px" width="14" height="14" viewBox="0 0 14 14"><rect x="0.5" y="0.5" width="13" height="13" fill="#fff" stroke="#a3a3a3"/></svg>
<svg style="left:409px;top:255px" width="14" height="14" viewBox="0 0 14 14"><rect x="0.5" y="0.5" width="13" height="13" fill="#fff" stroke="#a3a3a3"/></svg>
<svg style="left:449px;top:255px" width="14" height="14" viewBox="0 0 14 14"><rect x="0.5" y="0.5" width="13" height="13" fill="#fff" stroke="#a3a3a3"/></svg>
<svg style="left:489px;top:255px" width="14" height="14" viewBox="0 0 14 14"><rect x="0.5" y="0.5" width="13" height="13" fill="#fff" stroke="#a3a3a3"/><path d="M3.8 8.2 L5.9 10.2 L10.4 5" stroke="#7c7c7c" stroke-width="1.3" fill="none"/></svg>
<div class="a" style="left:520px;top:252px;color:#32323c;line-height:20px">-</div>
<div class="a" style="left:648px;top:252px;color:#32323c;line-height:20px">3 Расчётный</div>
<div class="a" style="left:23px;top:293px;width:743px;height:1px;background:#d0d0d0"></div>
<div class="a" style="left:27px;top:273px;color:#32323c;line-height:20px">0005 Т...</div>
<div class="a" style="left:77px;top:273px;color:#32323c;line-height:20px">-</div>
<div class="a" style="left:127px;top:273px;color:#32323c;line-height:20px"><span style="font-family:'Liberation Serif',serif;font-size:12px">I</span> режим</div>
<div class="a" style="left:296px;top:273px;width:56px;text-align:right;color:#32323c;line-height:20px">15</div>
<svg style="left:369px;top:276px" width="14" height="14" viewBox="0 0 14 14"><rect x="0.5" y="0.5" width="13" height="13" fill="#fff" stroke="#a3a3a3"/></svg>
<svg style="left:409px;top:276px" width="14" height="14" viewBox="0 0 14 14"><rect x="0.5" y="0.5" width="13" height="13" fill="#fff" stroke="#a3a3a3"/><path d="M3.8 8.2 L5.9 10.2 L10.4 5" stroke="#7c7c7c" stroke-width="1.3" fill="none"/></svg>
<svg style="left:449px;top:276px" width="14" height="14" viewBox="0 0 14 14"><rect x="0.5" y="0.5" width="13" height="13" fill="#fff" stroke="#a3a3a3"/></svg>
<svg style="left:489px;top:276px" width="14" height="14" viewBox="0 0 14 14"><rect x="0.5" y="0.5" width="13" height="13" fill="#fff" stroke="#a3a3a3"/></svg>
<div class="a" style="left:520px;top:273px;color:#32323c;line-height:20px">123 диЖелезо триокс...</div>
<div class="a" style="left:648px;top:273px;color:#32323c;line-height:20px">3 Расчётный</div>
<div class="a" style="left:23px;top:314px;width:743px;height:1px;background:#d0d0d0"></div>
<div class="a" style="left:27px;top:294px;color:#32323c;line-height:20px">0005 Т...</div>
<div class="a" style="left:77px;top:294px;color:#32323c;line-height:20px">-</div>
<div class="a" style="left:127px;top:294px;color:#32323c;line-height:20px"><span style="font-family:'Liberation Serif',serif;font-size:12px">I</span> режим</div>
<div class="a" style="left:296px;top:294px;width:56px;text-align:right;color:#32323c;line-height:20px">20</div>
<svg style="left:369px;top:297px" width="14" height="14" viewBox="0 0 14 14"><rect x="0.5" y="0.5" width="13" height="13" fill="#fff" stroke="#a3a3a3"/><path d="M3.8 8.2 L5.9 10.2 L10.4 5" stroke="#7c7c7c" stroke-width="1.3" fill="none"/></svg>
<svg style="left:409px;top:297px" width="14" height="14" viewBox="0 0 14 14"><rect x="0.5" y="0.5" width="13" height="13" fill="#fff" stroke="#a3a3a3"/></svg>
<svg style="left:449px;top:297px" width="14" height="14" viewBox="0 0 14 14"><rect x="0.5" y="0.5" width="13" height="13" fill="#fff" stroke="#a3a3a3"/><path d="M3.8 8.2 L5.9 10.2 L10.4 5" stroke="#7c7c7c" stroke-width="1.3" fill="none"/></svg>
<svg style="left:489px;top:297px" width="14" height="14" viewBox="0 0 14 14"><rect x="0.5" y="0.5" width="13" height="13" fill="#fff" stroke="#a3a3a3"/></svg>
<div class="a" style="left:520px;top:294px;color:#32323c;line-height:20px">123 диЖелезо триокс...</div>
<div class="a" style="left:648px;top:294px;color:#32323c;line-height:20px">3 Расчётный</div>
<div class="a" style="left:23px;top:335px;width:743px;height:1px;background:#d0d0d0"></div>
<div class="a" style="left:27px;top:315px;color:#32323c;line-height:20px">0005 Т...</div>
<div class="a" style="left:77px;top:315px;color:#32323c;line-height:20px">-</div>
<div class="a" style="left:127px;top:315px;color:#32323c;line-height:20px"><span style="font-family:'Liberation Serif',serif;font-size:12px">I</span> режим</div>
<div class="a" style="left:296px;top:315px;width:56px;text-align:right;color:#32323c;line-height:20px">40</div>
<svg style="left:369px;top:318px" width="14" height="14" viewBox="0 0 14 14"><rect x="0.5" y="0.5" width="13" height="13" fill="#fff" stroke="#a3a3a3"/></svg>
<svg style="left:409px;top:318px" width="14" height="14" viewBox="0 0 14 14"><rect x="0.5" y="0.5" width="13" height="13" fill="#fff" stroke="#a3a3a3"/></svg>
<svg style="left:449px;top:318px" width="14" height="14" viewBox="0 0 14 14"><rect x="0.5" y="0.5" width="13" height="13" fill="#fff" stroke="#a3a3a3"/></svg>
<svg style="left:489px;top:318px" width="14" height="14" viewBox="0 0 14 14"><rect x="0.5" y="0.5" width="13" height="13" fill="#fff" stroke="#a3a3a3"/><path d="M3.8 8.2 L5.9 10.2 L10.4 5" stroke="#7c7c7c" stroke-width="1.3" fill="none"/></svg>
<div class="a" style="left:520px;top:315px;color:#32323c;line-height:20px">123 диЖелезо триокс...</div>
<div class="a" style="left:648px;top:315px;color:#32323c;line-height:20px">3 Расчётный</div>
<div class="a" style="left:23px;top:356px;width:743px;height:1px;background:#d0d0d0"></div>
<div class="a" style="left:27px;top:336px;color:#32323c;line-height:20px">0005 Т...</div>
<div class="a" style="left:77px;top:336px;color:#32323c;line-height:20px">-</div>
<div class="a" style="left:127px;top:336px;color:#32323c;line-height:20px"><span style="font-family:'Liberation Serif',serif;font-size:12px">I</span> режим</div>
<div class="a" style="left:296px;top:336px;width:56px;text-align:right;color:#32323c;line-height:20px">15</div>
<svg style="left:369px;top:339px" width="14" height="14" viewBox="0 0 14 14"><rect x="0.5" y="0.5" width="13" height="13" fill="#fff" stroke="#a3a3a3"/></svg>
<svg style="left:409px;top:339px" width="14" height="14" viewBox="0 0 14 14"><rect x="0.5" y="0.5" width="13" height="13" fill="#fff" stroke="#a3a3a3"/><path d="M3.8 8.2 L5.9 10.2 L10.4 5" stroke="#7c7c7c" stroke-width="1.3" fill="none"/></svg>
<svg style="left:449px;top:339px" width="14" height="14" viewBox="0 0 14 14"><rect x="0.5" y="0.5" width="13" height="13" fill="#fff" stroke="#a3a3a3"/></svg>
<svg style="left:489px;top:339px" width="14" height="14" viewBox="0 0 14 14"><rect x="0.5" y="0.5" width="13" height="13" fill="#fff" stroke="#a3a3a3"/></svg>
<div class="a" style="left:520px;top:336px;color:#32323c;line-height:20px">2732 Керосин</div>
<div class="a" style="left:648px;top:336px;color:#32323c;line-height:20px">3 Расчётный</div>
<div class="a" style="left:23px;top:377px;width:743px;height:1px;background:#d0d0d0"></div>
<div class="a" style="left:27px;top:357px;color:#32323c;line-height:20px">0005 Т...</div>
<div class="a" style="left:77px;top:357px;color:#32323c;line-height:20px">-</div>
<div class="a" style="left:127px;top:357px;color:#32323c;line-height:20px"><span style="font-family:'Liberation Serif',serif;font-size:12px">I</span> режим</div>
<div class="a" style="left:296px;top:357px;width:56px;text-align:right;color:#32323c;line-height:20px">20</div>
<svg style="left:369px;top:360px" width="14" height="14" viewBox="0 0 14 14"><rect x="0.5" y="0.5" width="13" height="13" fill="#fff" stroke="#a3a3a3"/><path d="M3.8 8.2 L5.9 10.2 L10.4 5" stroke="#7c7c7c" stroke-width="1.3" fill="none"/></svg>
<svg style="left:409px;top:360px" width="14" height="14" viewBox="0 0 14 14"><rect x="0.5" y="0.5" width="13" height="13" fill="#fff" stroke="#a3a3a3"/></svg>
<svg style="left:449px;top:360px" width="14" height="14" viewBox="0 0 14 14"><rect x="0.5" y="0.5" width="13" height="13" fill="#fff" stroke="#a3a3a3"/><path d="M3.8 8.2 L5.9 10.2 L10.4 5" stroke="#7c7c7c" stroke-width="1.3" fill="none"/></svg>
<svg style="left:489px;top:360px" width="14" height="14" viewBox="0 0 14 14"><rect x="0.5" y="0.5" width="13" height="13" fill="#fff" stroke="#a3a3a3"/></svg>
<div class="a" style="left:520px;top:357px;color:#32323c;line-height:20px">2732 Керосин</div>
<div class="a" style="left:648px;top:357px;color:#32323c;line-height:20px">3 Расчётный</div>
<div class="a" style="left:23px;top:398px;width:743px;height:1px;background:#d0d0d0"></div>
<div class="a" style="left:27px;top:378px;color:#32323c;line-height:20px">0005 Т...</div>
<div class="a" style="left:77px;top:378px;color:#32323c;line-height:20px">-</div>
<div class="a" style="left:127px;top:378px;color:#32323c;line-height:20px"><span style="font-family:'Liberation Serif',serif;font-size:12px">I</span> режим</div>
<div class="a" style="left:296px;top:378px;width:56px;text-align:right;color:#32323c;line-height:20px">40</div>
<svg style="left:369px;top:381px" width="14" height="14" viewBox="0 0 14 14"><rect x="0.5" y="0.5" width="13" height="13" fill="#fff" stroke="#a3a3a3"/></svg>
<svg style="left:409px;top:381px" width="14" height="14" viewBox="0 0 14 14"><rect x="0.5" y="0.5" width="13" height="13" fill="#fff" stroke="#a3a3a3"/></svg>
<svg style="left:449px;top:381px" width="14" height="14" viewBox="0 0 14 14"><rect x="0.5" y="0.5" width="13" height="13" fill="#fff" stroke="#a3a3a3"/></svg>
<svg style="left:489px;top:381px" width="14" height="14" viewBox="0 0 14 14"><rect x="0.5" y="0.5" width="13" height="13" fill="#fff" stroke="#a3a3a3"/><path d="M3.8 8.2 L5.9 10.2 L10.4 5" stroke="#7c7c7c" stroke-width="1.3" fill="none"/></svg>
<div class="a" style="left:520px;top:378px;color:#32323c;line-height:20px">2732 Керосин</div>
<div class="a" style="left:648px;top:378px;color:#32323c;line-height:20px">3 Расчётный</div>
<div class="a" style="left:23px;top:419px;width:743px;height:1px;background:#d0d0d0"></div>
<div class="a" style="left:27px;top:399px;color:#32323c;line-height:20px">0005 Т...</div>
<div class="a" style="left:77px;top:399px;color:#32323c;line-height:20px">-</div>
<div class="a" style="left:127px;top:399px;color:#32323c;line-height:20px"><span style="font-family:'Liberation Serif',serif;font-size:12px">I</span> режим</div>
<div class="a" style="left:296px;top:399px;width:56px;text-align:right;color:#32323c;line-height:20px">15</div>
<svg style="left:369px;top:402px" width="14" height="14" viewBox="0 0 14 14"><rect x="0.5" y="0.5" width="13" height="13" fill="#fff" stroke="#a3a3a3"/></svg>
<svg style="left:409px;top:402px" width="14" height="14" viewBox="0 0 14 14"><rect x="0.5" y="0.5" width="13" height="13" fill="#fff" stroke="#a3a3a3"/><path d="M3.8 8.2 L5.9 10.2 L10.4 5" stroke="#7c7c7c" stroke-width="1.3" fill="none"/></svg>
<svg style="left:449px;top:402px" width="14" height="14" viewBox="0 0 14 14"><rect x="0.5" y="0.5" width="13" height="13" fill="#fff" stroke="#a3a3a3"/></svg>
<svg style="left:489px;top:402px" width="14" height="14" viewBox="0 0 14 14"><rect x="0.5" y="0.5" width="13" height="13" fill="#fff" stroke="#a3a3a3"/></svg>
<div class="a" style="left:520px;top:399px;color:#32323c;line-height:20px">2930 Пыль абразивная</div>
<div class="a" style="left:648px;top:399px;color:#32323c;line-height:20px">3 Расчётный</div>
<div class="a" style="left:23px;top:440px;width:743px;height:1px;background:#d0d0d0"></div>
<div class="a" style="left:27px;top:420px;color:#32323c;line-height:20px">0005 Т...</div>
<div class="a" style="left:77px;top:420px;color:#32323c;line-height:20px">-</div>
<div class="a" style="left:127px;top:420px;color:#32323c;line-height:20px"><span style="font-family:'Liberation Serif',serif;font-size:12px">II</span> режим</div>
<div class="a" style="left:296px;top:420px;width:56px;text-align:right;color:#32323c;line-height:20px">20</div>
<svg style="left:369px;top:423px" width="14" height="14" viewBox="0 0 14 14"><rect x="0.5" y="0.5" width="13" height="13" fill="#fff" stroke="#a3a3a3"/><path d="M3.8 8.2 L5.9 10.2 L10.4 5" stroke="#7c7c7c" stroke-width="1.3" fill="none"/></svg>
<svg style="left:409px;top:423px" width="14" height="14" viewBox="0 0 14 14"><rect x="0.5" y="0.5" width="13" height="13" fill="#fff" stroke="#a3a3a3"/></svg>
<svg style="left:449px;top:423px" width="14" height="14" viewBox="0 0 14 14"><rect x="0.5" y="0.5" width="13" height="13" fill="#fff" stroke="#a3a3a3"/><path d="M3.8 8.2 L5.9 10.2 L10.4 5" stroke="#7c7c7c" stroke-width="1.3" fill="none"/></svg>
<svg style="left:489px;top:423px" width="14" height="14" viewBox="0 0 14 14"><rect x="0.5" y="0.5" width="13" height="13" fill="#fff" stroke="#a3a3a3"/></svg>
<div class="a" style="left:520px;top:420px;color:#32323c;line-height:20px">2930 Пыль абразивная</div>
<div class="a" style="left:648px;top:420px;color:#32323c;line-height:20px">3 Расчётный</div>
<div class="a" style="left:23px;top:461px;width:743px;height:1px;background:#d0d0d0"></div>
<div class="a" style="left:27px;top:441px;color:#32323c;line-height:20px">0005 Т...</div>
<div class="a" style="left:77px;top:441px;color:#32323c;line-height:20px">-</div>
<div class="a" style="left:127px;top:441px;color:#32323c;line-height:20px"><span style="font-family:'Liberation Serif',serif;font-size:12px">III</span> режим</div>
<div class="a" style="left:296px;top:441px;width:56px;text-align:right;color:#32323c;line-height:20px">40</div>
<svg style="left:369px;top:444px" width="14" height="14" viewBox="0 0 14 14"><rect x="0.5" y="0.5" width="13" height="13" fill="#fff" stroke="#a3a3a3"/></svg>
<svg style="left:409px;top:444px" width="14" height="14" viewBox="0 0 14 14"><rect x="0.5" y="0.5" width="13" height="13" fill="#fff" stroke="#a3a3a3"/></svg>
<svg style="left:449px;top:444px" width="14" height="14" viewBox="0 0 14 14"><rect x="0.5" y="0.5" width="13" height="13" fill="#fff" stroke="#a3a3a3"/></svg>
<svg style="left:489px;top:444px" width="14" height="14" viewBox="0 0 14 14"><rect x="0.5" y="0.5" width="13" height="13" fill="#fff" stroke="#a3a3a3"/><path d="M3.8 8.2 L5.9 10.2 L10.4 5" stroke="#7c7c7c" stroke-width="1.3" fill="none"/></svg>
<div class="a" style="left:520px;top:441px;color:#32323c;line-height:20px">2930 Пыль абразивная</div>
<div class="a" style="left:648px;top:441px;color:#32323c;line-height:20px">3 Расчётный</div>
<div class="a" style="left:23px;top:482px;width:743px;height:1px;background:#d0d0d0"></div>
<div class="a" style="left:27px;top:462px;color:#32323c;line-height:20px">0006 Т...</div>
<div class="a" style="left:77px;top:462px;color:#32323c;line-height:20px">4 1-я с...</div>
<div class="a" style="left:127px;top:462px;color:#32323c;line-height:20px"><span style="font-family:'Liberation Serif',serif;font-size:12px">I</span> режим</div>
<div class="a" style="left:296px;top:462px;width:56px;text-align:right;color:#32323c;line-height:20px">15</div>
<svg style="left:369px;top:465px" width="14" height="14" viewBox="0 0 14 14"><rect x="0.5" y="0.5" width="13" height="13" fill="#fff" stroke="#a3a3a3"/></svg>
<svg style="left:409px;top:465px" width="14" height="14" viewBox="0 0 14 14"><rect x="0.5" y="0.5" width="13" height="13" fill="#fff" stroke="#a3a3a3"/><path d="M3.8 8.2 L5.9 10.2 L10.4 5" stroke="#7c7c7c" stroke-width="1.3" fill="none"/></svg>
<svg style="left:449px;top:465px" width="14" height="14" viewBox="0 0 14 14"><rect x="0.5" y="0.5" width="13" height="13" fill="#fff" stroke="#a3a3a3"/></svg>
<svg style="left:489px;top:465px" width="14" height="14" viewBox="0 0 14 14"><rect x="0.5" y="0.5" width="13" height="13" fill="#fff" stroke="#a3a3a3"/></svg>
<div class="a" style="left:520px;top:462px;color:#32323c;line-height:20px">150 Натрий гидроксид</div>
<div class="a" style="left:648px;top:462px;color:#32323c;line-height:20px">3 Расчётный</div>
<div class="a" style="left:23px;top:503px;width:743px;height:1px;background:#d0d0d0"></div>
<div class="a" style="left:27px;top:483px;color:#32323c;line-height:20px">0006 Т...</div>
<div class="a" style="left:77px;top:483px;color:#32323c;line-height:20px">4 1-я с...</div>
<div class="a" style="left:127px;top:483px;color:#32323c;line-height:20px"><span style="font-family:'Liberation Serif',serif;font-size:12px">II</span> режим</div>
<div class="a" style="left:296px;top:483px;width:56px;text-align:right;color:#32323c;line-height:20px">20</div>
<svg style="left:369px;top:486px" width="14" height="14" viewBox="0 0 14 14"><rect x="0.5" y="0.5" width="13" height="13" fill="#fff" stroke="#a3a3a3"/><path d="M3.8 8.2 L5.9 10.2 L10.4 5" stroke="#7c7c7c" stroke-width="1.3" fill="none"/></svg>
<svg style="left:409px;top:486px" width="14" height="14" viewBox="0 0 14 14"><rect x="0.5" y="0.5" width="13" height="13" fill="#fff" stroke="#a3a3a3"/></svg>
<svg style="left:449px;top:486px" width="14" height="14" viewBox="0 0 14 14"><rect x="0.5" y="0.5" width="13" height="13" fill="#fff" stroke="#a3a3a3"/><path d="M3.8 8.2 L5.9 10.2 L10.4 5" stroke="#7c7c7c" stroke-width="1.3" fill="none"/></svg>
<svg style="left:489px;top:486px" width="14" height="14" viewBox="0 0 14 14"><rect x="0.5" y="0.5" width="13" height="13" fill="#fff" stroke="#a3a3a3"/></svg>
<div class="a" style="left:520px;top:483px;color:#32323c;line-height:20px">150 Натрий гидроксид</div>
<div class="a" style="left:648px;top:483px;color:#32323c;line-height:20px">3 Расчётный</div>
<div class="a" style="left:23px;top:524px;width:743px;height:1px;background:#d0d0d0"></div>
<div class="a" style="left:27px;top:504px;color:#32323c;line-height:20px">0006 Т...</div>
<div class="a" style="left:77px;top:504px;color:#32323c;line-height:20px">4 1-я с...</div>
<div class="a" style="left:127px;top:504px;color:#32323c;line-height:20px"><span style="font-family:'Liberation Serif',serif;font-size:12px">III</span> режим</div>
<div class="a" style="left:296px;top:504px;width:56px;text-align:right;color:#32323c;line-height:20px">40</div>
<svg style="left:369px;top:507px" width="14" height="14" viewBox="0 0 14 14"><rect x="0.5" y="0.5" width="13" height="13" fill="#fff" stroke="#a3a3a3"/></svg>
<svg style="left:409px;top:507px" width="14" height="14" viewBox="0 0 14 14"><rect x="0.5" y="0.5" width="13" height="13" fill="#fff" stroke="#a3a3a3"/></svg>
<svg style="left:449px;top:507px" width="14" height="14" viewBox="0 0 14 14"><rect x="0.5" y="0.5" width="13" height="13" fill="#fff" stroke="#a3a3a3"/></svg>
<svg style="left:489px;top:507px" width="14" height="14" viewBox="0 0 14 14"><rect x="0.5" y="0.5" width="13" height="13" fill="#fff" stroke="#a3a3a3"/><path d="M3.8 8.2 L5.9 10.2 L10.4 5" stroke="#7c7c7c" stroke-width="1.3" fill="none"/></svg>
<div class="a" style="left:520px;top:504px;color:#32323c;line-height:20px">150 Натрий гидроксид</div>
<div class="a" style="left:648px;top:504px;color:#32323c;line-height:20px">3 Расчётный</div>
<div class="a" style="left:23px;top:545px;width:743px;height:1px;background:#d0d0d0"></div>
<div class="a" style="left:27px;top:525px;color:#32323c;line-height:20px">0006 Т...</div>
<div class="a" style="left:77px;top:525px;color:#32323c;line-height:20px">4 1-я с...</div>
<div class="a" style="left:127px;top:525px;color:#32323c;line-height:20px"><span style="font-family:'Liberation Serif',serif;font-size:12px">I</span> режим</div>
<div class="a" style="left:296px;top:525px;width:56px;text-align:right;color:#32323c;line-height:20px">15</div>
<svg style="left:369px;top:528px" width="14" height="14" viewBox="0 0 14 14"><rect x="0.5" y="0.5" width="13" height="13" fill="#fff" stroke="#a3a3a3"/></svg>
<svg style="left:409px;top:528px" width="14" height="14" viewBox="0 0 14 14"><rect x="0.5" y="0.5" width="13" height="13" fill="#fff" stroke="#a3a3a3"/><path d="M3.8 8.2 L5.9 10.2 L10.4 5" stroke="#7c7c7c" stroke-width="1.3" fill="none"/></svg>
<svg style="left:449px;top:528px" width="14" height="14" viewBox="0 0 14 14"><rect x="0.5" y="0.5" width="13" height="13" fill="#fff" stroke="#a3a3a3"/></svg>
<svg style="left:489px;top:528px" width="14" height="14" viewBox="0 0 14 14"><rect x="0.5" y="0.5" width="13" height="13" fill="#fff" stroke="#a3a3a3"/></svg>
<div class="a" style="left:520px;top:525px;color:#32323c;line-height:20px">2732 Керосин</div>
<div class="a" style="left:648px;top:525px;color:#32323c;line-height:20px">3 Расчётный</div>
<div class="a" style="left:23px;top:566px;width:743px;height:1px;background:#d0d0d0"></div>
<div class="a" style="left:27px;top:546px;color:#32323c;line-height:20px">0006 Т...</div>
<div class="a" style="left:77px;top:546px;color:#32323c;line-height:20px">4 1-я с...</div>
<div class="a" style="left:127px;top:546px;color:#32323c;line-height:20px"><span style="font-family:'Liberation Serif',serif;font-size:12px">I</span> режим</div>
<div class="a" style="left:296px;top:546px;width:56px;text-align:right;color:#32323c;line-height:20px">20</div>
<svg style="left:369px;top:549px" width="14" height="14" viewBox="0 0 14 14"><rect x="0.5" y="0.5" width="13" height="13" fill="#fff" stroke="#a3a3a3"/><path d="M3.8 8.2 L5.9 10.2 L10.4 5" stroke="#7c7c7c" stroke-width="1.3" fill="none"/></svg>
<svg style="left:409px;top:549px" width="14" height="14" viewBox="0 0 14 14"><rect x="0.5" y="0.5" width="13" height="13" fill="#fff" stroke="#a3a3a3"/></svg>
<svg style="left:449px;top:549px" width="14" height="14" viewBox="0 0 14 14"><rect x="0.5" y="0.5" width="13" height="13" fill="#fff" stroke="#a3a3a3"/><path d="M3.8 8.2 L5.9 10.2 L10.4 5" stroke="#7c7c7c" stroke-width="1.3" fill="none"/></svg>
<svg style="left:489px;top:549px" width="14" height="14" viewBox="0 0 14 14"><rect x="0.5" y="0.5" width="13" height="13" fill="#fff" stroke="#a3a3a3"/></svg>
<div class="a" style="left:520px;top:546px;color:#32323c;line-height:20px">2732 Керосин</div>
<div class="a" style="left:648px;top:546px;color:#32323c;line-height:20px">3 Расчётный</div>
<div class="a" style="left:23px;top:587px;width:743px;height:1px;background:#d0d0d0"></div>
<div class="a" style="left:27px;top:567px;color:#32323c;line-height:20px">0006 Т...</div>
<div class="a" style="left:77px;top:567px;color:#32323c;line-height:20px">4 1-я с...</div>
<div class="a" style="left:127px;top:567px;color:#32323c;line-height:20px"><span style="font-family:'Liberation Serif',serif;font-size:12px">I</span> режим</div>
<div class="a" style="left:296px;top:567px;width:56px;text-align:right;color:#32323c;line-height:20px">40</div>
<svg style="left:369px;top:570px" width="14" height="14" viewBox="0 0 14 14"><rect x="0.5" y="0.5" width="13" height="13" fill="#fff" stroke="#a3a3a3"/></svg>
<svg style="left:409px;top:570px" width="14" height="14" viewBox="0 0 14 14"><rect x="0.5" y="0.5" width="13" height="13" fill="#fff" stroke="#a3a3a3"/></svg>
<svg style="left:449px;top:570px" width="14" height="14" viewBox="0 0 14 14"><rect x="0.5" y="0.5" width="13" height="13" fill="#fff" stroke="#a3a3a3"/></svg>
<svg style="left:489px;top:570px" width="14" height="14" viewBox="0 0 14 14"><rect x="0.5" y="0.5" width="13" height="13" fill="#fff" stroke="#a3a3a3"/><path d="M3.8 8.2 L5.9 10.2 L10.4 5" stroke="#7c7c7c" stroke-width="1.3" fill="none"/></svg>
<div class="a" style="left:520px;top:567px;color:#32323c;line-height:20px">2732 Керосин</div>
<div class="a" style="left:648px;top:567px;color:#32323c;line-height:20px">3 Расчётный</div>
<div class="a" style="left:23px;top:608px;width:743px;height:1px;background:#d0d0d0"></div>
<div class="a" style="left:27px;top:588px;color:#32323c;line-height:20px">0008 Т...</div>
<div class="a" style="left:77px;top:588px;color:#32323c;line-height:20px">-</div>
<div class="a" style="left:127px;top:588px;color:#32323c;line-height:20px"><span style="font-family:'Liberation Serif',serif;font-size:12px">I</span> режим</div>
<div class="a" style="left:296px;top:588px;width:56px;text-align:right;color:#32323c;line-height:20px">15</div>
<svg style="left:369px;top:591px" width="14" height="14" viewBox="0 0 14 14"><rect x="0.5" y="0.5" width="13" height="13" fill="#fff" stroke="#a3a3a3"/></svg>
<svg style="left:409px;top:591px" width="14" height="14" viewBox="0 0 14 14"><rect x="0.5" y="0.5" width="13" height="13" fill="#fff" stroke="#a3a3a3"/><path d="M3.8 8.2 L5.9 10.2 L10.4 5" stroke="#7c7c7c" stroke-width="1.3" fill="none"/></svg>
<svg style="left:449px;top:591px" width="14" height="14" viewBox="0 0 14 14"><rect x="0.5" y="0.5" width="13" height="13" fill="#fff" stroke="#a3a3a3"/></svg>
<svg style="left:489px;top:591px" width="14" height="14" viewBox="0 0 14 14"><rect x="0.5" y="0.5" width="13" height="13" fill="#fff" stroke="#a3a3a3"/></svg>
<div class="a" style="left:520px;top:588px;color:#32323c;line-height:20px">2902 Взвешенные ве...</div>
<div class="a" style="left:648px;top:588px;color:#32323c;line-height:20px">3 Расчётный</div>
<div class="a" style="left:23px;top:629px;width:743px;height:1px;background:#d0d0d0"></div>
<div class="a" style="left:27px;top:609px;color:#32323c;line-height:20px">0008 Т...</div>
<div class="a" style="left:77px;top:609px;color:#32323c;line-height:20px">-</div>
<div class="a" style="left:127px;top:609px;color:#32323c;line-height:20px"><span style="font-family:'Liberation Serif',serif;font-size:12px">II</span> режим</div>
<div class="a" style="left:296px;top:609px;width:56px;text-align:right;color:#32323c;line-height:20px">20</div>
<svg style="left:369px;top:612px" width="14" height="14" viewBox="0 0 14 14"><rect x="0.5" y="0.5" width="13" height="13" fill="#fff" stroke="#a3a3a3"/><path d="M3.8 8.2 L5.9 10.2 L10.4 5" stroke="#7c7c7c" stroke-width="1.3" fill="none"/></svg>
<svg style="left:409px;top:612px" width="14" height="14" viewBox="0 0 14 14"><rect x="0.5" y="0.5" width="13" height="13" fill="#fff" stroke="#a3a3a3"/></svg>
<svg style="left:449px;top:612px" width="14" height="14" viewBox="0 0 14 14"><rect x="0.5" y="0.5" width="13" height="13" fill="#fff" stroke="#a3a3a3"/><path d="M3.8 8.2 L5.9 10.2 L10.4 5" stroke="#7c7c7c" stroke-width="1.3" fill="none"/></svg>
<svg style="left:489px;top:612px" width="14" height="14" viewBox="0 0 14 14"><rect x="0.5" y="0.5" width="13" height="13" fill="#fff" stroke="#a3a3a3"/></svg>
<div class="a" style="left:520px;top:609px;color:#32323c;line-height:20px">2902 Взвешенные ве...</div>
<div class="a" style="left:648px;top:609px;color:#32323c;line-height:20px">3 Расчётный</div>
<div class="a" style="left:23px;top:650px;width:743px;height:1px;background:#d0d0d0"></div>
<div class="a" style="left:27px;top:630px;color:#32323c;line-height:20px">0008 Т...</div>
<div class="a" style="left:77px;top:630px;color:#32323c;line-height:20px">-</div>
<div class="a" style="left:127px;top:630px;color:#32323c;line-height:20px"><span style="font-family:'Liberation Serif',serif;font-size:12px">III</span> режим</div>
<div class="a" style="left:296px;top:630px;width:56px;text-align:right;color:#32323c;line-height:20px">40</div>
<svg style="left:369px;top:633px" width="14" height="14" viewBox="0 0 14 14"><rect x="0.5" y="0.5" width="13" height="13" fill="#fff" stroke="#a3a3a3"/></svg>
<svg style="left:409px;top:633px" width="14" height="14" viewBox="0 0 14 14"><rect x="0.5" y="0.5" width="13" height="13" fill="#fff" stroke="#a3a3a3"/></svg>
<svg style="left:449px;top:633px" width="14" height="14" viewBox="0 0 14 14"><rect x="0.5" y="0.5" width="13" height="13" fill="#fff" stroke="#a3a3a3"/></svg>
<svg style="left:489px;top:633px" width="14" height="14" viewBox="0 0 14 14"><rect x="0.5" y="0.5" width="13" height="13" fill="#fff" stroke="#a3a3a3"/><path d="M3.8 8.2 L5.9 10.2 L10.4 5" stroke="#7c7c7c" stroke-width="1.3" fill="none"/></svg>
<div class="a" style="left:520px;top:630px;color:#32323c;line-height:20px">2902 Взвешенные ве...</div>
<div class="a" style="left:648px;top:630px;color:#32323c;line-height:20px">3 Расчётный</div>
<div class="a" style="left:23px;top:671px;width:743px;height:1px;background:#d0d0d0"></div>
<div class="a" style="left:27px;top:651px;color:#32323c;line-height:20px">0010 Т...</div>
<div class="a" style="left:77px;top:651px;color:#32323c;line-height:20px">-</div>
<div class="a" style="left:127px;top:651px;color:#32323c;line-height:20px"><span style="font-family:'Liberation Serif',serif;font-size:12px">I</span> режим</div>
<div class="a" style="left:296px;top:651px;width:56px;text-align:right;color:#32323c;line-height:20px">15</div>
<svg style="left:369px;top:654px" width="14" height="14" viewBox="0 0 14 14"><rect x="0.5" y="0.5" width="13" height="13" fill="#fff" stroke="#a3a3a3"/></svg>
<svg style="left:409px;top:654px" width="14" height="14" viewBox="0 0 14 14"><rect x="0.5" y="0.5" width="13" height="13" fill="#fff" stroke="#a3a3a3"/><path d="M3.8 8.2 L5.9 10.2 L10.4 5" stroke="#7c7c7c" stroke-width="1.3" fill="none"/></svg>
<svg style="left:449px;top:654px" width="14" height="14" viewBox="0 0 14 14"><rect x="0.5" y="0.5" width="13" height="13" fill="#fff" stroke="#a3a3a3"/></svg>
<svg style="left:489px;top:654px" width="14" height="14" viewBox="0 0 14 14"><rect x="0.5" y="0.5" width="13" height="13" fill="#fff" stroke="#a3a3a3"/></svg>
<div class="a" style="left:520px;top:651px;color:#32323c;line-height:20px">2902 Взвешенные ве...</div>
<div class="a" style="left:648px;top:651px;color:#32323c;line-height:20px">3 Расчётный</div>
<div class="a" style="left:22px;top:0;width:1px;height:658px;background:#d0d0d0"></div>
<div class="a" style="left:72px;top:0;width:1px;height:658px;background:#d0d0d0"></div>
<div class="a" style="left:122px;top:0;width:1px;height:658px;background:#d0d0d0"></div>
<div class="a" style="left:295px;top:0;width:1px;height:658px;background:#d0d0d0"></div>
<div class="a" style="left:355px;top:0;width:1px;height:658px;background:#d0d0d0"></div>
<div class="a" style="left:395px;top:0;width:1px;height:658px;background:#d0d0d0"></div>
<div class="a" style="left:435px;top:0;width:1px;height:658px;background:#d0d0d0"></div>
<div class="a" style="left:475px;top:0;width:1px;height:658px;background:#d0d0d0"></div>
<div class="a" style="left:515px;top:0;width:1px;height:658px;background:#d0d0d0"></div>
<div class="a" style="left:643px;top:0;width:1px;height:658px;background:#d0d0d0"></div>
<div class="a" style="left:763px;top:0;width:1px;height:658px;background:#d0d0d0"></div>
</div>
<div class="a" style="left:777px;top:250px;width:17px;height:658px;background:#efefef"></div>
<div class="a" style="left:778px;top:251px;width:15px;height:16px;background:#fff;border:1px solid #a6a6a6"></div>
<svg style="left:778px;top:251px" width="15" height="16" viewBox="0 0 15 16"><path d="M4 10 L7.5 6.5 L11 10 Z" fill="#8a8a8a"/></svg>
<div class="a" style="left:778px;top:267px;width:15px;height:40px;background:#fff;border:1px solid #a6a6a6"></div>
<div class="a" style="left:778px;top:891px;width:15px;height:16px;background:#fff;border:1px solid #a6a6a6"></div>
<svg style="left:778px;top:891px" width="15" height="16" viewBox="0 0 15 16"><path d="M4 6.5 L7.5 10 L11 6.5 Z" fill="#8a8a8a"/></svg>
<div class="a" style="left:19px;top:908px;line-height:19px;color:#2e2e44">10 из 481</div>
<svg style="left:70px;top:905px" width="80" height="22" viewBox="70 905 80 22"><path d="M83 913 v8 M79 917 h8" stroke="#777" stroke-width="1.8"/><path d="M95 917 h8" stroke="#777" stroke-width="1.8"/><path d="M112.5 915 V911.5 H118.5 L121.5 914.5 V920.5 H117.5" stroke="#1a64b4" stroke-width="1.1" fill="none"/><rect x="109.5" y="915.5" width="8" height="8" stroke="#1a64b4" stroke-width="1.1" fill="#fff"/><path d="M110.8 917.5 h5.4 M113.5 917.5 v5" stroke="#1a64b4" stroke-width="1.1"/><rect x="128.5" y="912.5" width="10.5" height="11" stroke="#1a64b4" stroke-width="1.1" fill="none"/><rect x="130.8" y="911" width="6" height="3" rx="1" stroke="#1a64b4" stroke-width="1.1" fill="#fff"/><path d="M131 917.5 h5.5 M133.75 917.5 v5" stroke="#1a64b4" stroke-width="1.1"/></svg>
<div class="a" style="left:143px;top:909px;width:651px;height:17px;background:#efefef"></div>
<div class="a" style="left:143px;top:910px;width:16px;height:15px;background:#fff;border:1px solid #a6a6a6"></div>
<svg style="left:143px;top:910px" width="16" height="16" viewBox="0 0 16 16"><path d="M10 4.5 L6.5 8 L10 11.5 Z" fill="#8a8a8a"/></svg>
<div class="a" style="left:158px;top:910px;width:410px;height:15px;background:#fff;border:1px solid #a6a6a6"></div>
<div class="a" style="left:777px;top:910px;width:16px;height:15px;background:#fff;border:1px solid #a6a6a6"></div>
<svg style="left:777px;top:910px" width="16" height="16" viewBox="0 0 16 16"><path d="M6.5 4.5 L10 8 L6.5 11.5 Z" fill="#8a8a8a"/></svg>
<svg style="left:0;top:160px" width="60" height="40" viewBox="0 160 60 40" fill="none"><path d="M20.7 185.4 A3.8 3.8 0 0 1 20 178.1 A7.6 7.6 0 0 1 33.8 176.4 A4.6 4.6 0 0 1 37.4 185.4 Z" stroke="#777" stroke-width="1.1" stroke-linejoin="round"/><path d="M32.6 183.4 L26.2 189.3 H31.7 L26.2 194.7" stroke="#e8174f" stroke-width="1.4"/></svg>
<div class="a" style="left:54px;top:175px;font-size:15.5px;color:#474747">Мероприятия на ИЗАВ</div><div class="a" style="left:805px;top:168px;width:465px;height:748px;background:#fff;border:1px solid #a0a0a0"></div>
<div class="a" style="left:806px;top:169px;width:463px;height:398px;background:#f7f7f7"></div>
<div class="a" style="left:831px;top:169px;line-height:18px;font-size:12px;font-weight:bold;color:#333">Принадлежность</div>
<svg style="left:1250px;top:175px" width="16" height="8" viewBox="0 0 16 8"><path d="M1.5 7 L8 1 L14.5 7" stroke="#8a8a8a" stroke-width="1.1" fill="none"/></svg>
<div class="a" style="left:827px;top:187px;width:442px;height:1px;background:#d4d4d4"></div>
<div class="a" style="left:828px;top:188px;width:441px;height:21px;background:#fff"></div>
<div class="a" style="left:827px;top:209px;width:442px;height:1px;background:#d4d4d4"></div>
<div class="a" style="left:852px;top:188px;line-height:21px;color:#3a3a4e">№ пл.</div>
<div class="a" style="left:1019px;top:188px;line-height:21px;font-size:12px;font-weight:bold;color:#333">Депо</div>
<div class="a" style="left:828px;top:210px;width:441px;height:21px;background:#fff"></div>
<div class="a" style="left:827px;top:231px;width:442px;height:1px;background:#d4d4d4"></div>
<div class="a" style="left:852px;top:210px;line-height:21px;color:#3a3a4e">№ цех</div>
<div class="a" style="left:1019px;top:210px;line-height:21px;font-size:12px;font-weight:bold;color:#333">002 Вагоносборочный</div>
<div class="a" style="left:831px;top:232px;line-height:18px;font-size:12px;font-weight:bold;color:#333">Источник</div>
<svg style="left:1250px;top:238px" width="16" height="8" viewBox="0 0 16 8"><path d="M1.5 7 L8 1 L14.5 7" stroke="#8a8a8a" stroke-width="1.1" fill="none"/></svg>
<div class="a" style="left:827px;top:250px;width:442px;height:1px;background:#d4d4d4"></div>
<div class="a" style="left:828px;top:251px;width:441px;height:21px;background:#fff"></div>
<div class="a" style="left:827px;top:272px;width:442px;height:1px;background:#d4d4d4"></div>
<div class="a" style="left:852px;top:251px;line-height:21px;color:#3a3a4e">№изав</div>
<div class="a" style="left:1019px;top:251px;line-height:21px;font-size:12px;font-weight:bold;color:#333">0003 Труба</div>
<div class="a" style="left:828px;top:273px;width:441px;height:21px;background:#fff"></div>
<div class="a" style="left:827px;top:294px;width:442px;height:1px;background:#d4d4d4"></div>
<div class="a" style="left:852px;top:273px;line-height:21px;color:#3a3a4e">№реж.</div>
<div class="a" style="left:1019px;top:273px;line-height:21px;font-size:12px;font-weight:bold;color:#333">3 1-я смена</div>
<div class="a" style="left:831px;top:295px;line-height:18px;font-size:12px;font-weight:bold;color:#333">Мероприятие при НМУ</div>
<svg style="left:1250px;top:301px" width="16" height="8" viewBox="0 0 16 8"><path d="M1.5 7 L8 1 L14.5 7" stroke="#8a8a8a" stroke-width="1.1" fill="none"/></svg>
<div class="a" style="left:827px;top:313px;width:442px;height:1px;background:#d4d4d4"></div>
<div class="a" style="left:828px;top:314px;width:441px;height:16px;background:#fff"></div>
<div class="a" style="left:827px;top:330px;width:442px;height:1px;background:#d4d4d4"></div>
<div class="a" style="left:852px;top:314px;line-height:16px;letter-spacing:-0.2px;color:#3a3a4e">Наименование мероприятия</div>
<div class="a" style="left:1019px;top:314px;line-height:16px;font-size:12px;font-weight:bold;color:#333">Запретить работу оборудования</div>
<div class="a" style="left:828px;top:331px;width:441px;height:16px;background:#fff"></div>
<div class="a" style="left:827px;top:347px;width:442px;height:1px;background:#d4d4d4"></div>
<div class="a" style="left:852px;top:331px;line-height:16px;color:#3a3a4e">ΔНМУ, %</div>
<div class="a" style="left:1019px;top:331px;line-height:16px;font-size:12px;font-weight:bold;color:#333">100</div>
<div class="a" style="left:831px;top:348px;line-height:18px;font-size:12px;font-weight:bold;color:#333">Учёт</div>
<svg style="left:1250px;top:354px" width="16" height="8" viewBox="0 0 16 8"><path d="M1.5 7 L8 1 L14.5 7" stroke="#8a8a8a" stroke-width="1.1" fill="none"/></svg>
<div class="a" style="left:827px;top:366px;width:442px;height:1px;background:#d4d4d4"></div>
<div class="a" style="left:828px;top:367px;width:441px;height:16px;background:#fff"></div>
<div class="a" style="left:827px;top:383px;width:442px;height:1px;background:#d4d4d4"></div>
<div class="a" style="left:852px;top:367px;line-height:16px;color:#3a3a4e">[o]</div>
<svg style="left:1135px;top:368px" width="14" height="14" viewBox="0 0 14 14"><rect x="0.5" y="0.5" width="13" height="13" fill="#fff" stroke="#a3a3a3"/><path d="M3.8 8.2 L5.9 10.2 L10.4 5" stroke="#7c7c7c" stroke-width="1.3" fill="none"/></svg>
<div class="a" style="left:828px;top:384px;width:441px;height:16px;background:#fff"></div>
<div class="a" style="left:827px;top:400px;width:442px;height:1px;background:#d4d4d4"></div>
<div class="a" style="left:852px;top:384px;line-height:16px;color:#3a3a4e">[1]</div>
<svg style="left:1135px;top:385px" width="14" height="14" viewBox="0 0 14 14"><rect x="0.5" y="0.5" width="13" height="13" fill="#fff" stroke="#a3a3a3"/><path d="M3.8 8.2 L5.9 10.2 L10.4 5" stroke="#7c7c7c" stroke-width="1.3" fill="none"/></svg>
<div class="a" style="left:828px;top:401px;width:441px;height:16px;background:#fff"></div>
<div class="a" style="left:827px;top:417px;width:442px;height:1px;background:#d4d4d4"></div>
<div class="a" style="left:852px;top:401px;line-height:16px;color:#3a3a4e">[2]</div>
<svg style="left:1135px;top:402px" width="14" height="14" viewBox="0 0 14 14"><rect x="0.5" y="0.5" width="13" height="13" fill="#fff" stroke="#a3a3a3"/><path d="M3.8 8.2 L5.9 10.2 L10.4 5" stroke="#7c7c7c" stroke-width="1.3" fill="none"/></svg>
<div class="a" style="left:828px;top:418px;width:441px;height:16px;background:#fff"></div>
<div class="a" style="left:827px;top:434px;width:442px;height:1px;background:#d4d4d4"></div>
<div class="a" style="left:852px;top:418px;line-height:16px;color:#3a3a4e">[3]</div>
<svg style="left:1135px;top:419px" width="14" height="14" viewBox="0 0 14 14"><rect x="0.5" y="0.5" width="13" height="13" fill="#fff" stroke="#a3a3a3"/><path d="M3.8 8.2 L5.9 10.2 L10.4 5" stroke="#7c7c7c" stroke-width="1.3" fill="none"/></svg>
<div class="a" style="left:831px;top:435px;line-height:18px;font-size:12px;font-weight:bold;color:#333">Вещество НМУ</div>
<svg style="left:1250px;top:441px" width="16" height="8" viewBox="0 0 16 8"><path d="M1.5 7 L8 1 L14.5 7" stroke="#8a8a8a" stroke-width="1.1" fill="none"/></svg>
<div class="a" style="left:827px;top:453px;width:442px;height:1px;background:#d4d4d4"></div>
<div class="a" style="left:828px;top:454px;width:441px;height:21px;background:#fff"></div>
<div class="a" style="left:827px;top:475px;width:442px;height:1px;background:#d4d4d4"></div>
<div class="a" style="left:852px;top:454px;line-height:21px;color:#3a3a4e">Код вещества</div>
<div class="a" style="left:1019px;top:454px;line-height:21px;color:#333">-</div>
<div class="a" style="left:828px;top:476px;width:441px;height:21px;background:#fff"></div>
<div class="a" style="left:827px;top:497px;width:442px;height:1px;background:#d4d4d4"></div>
<div class="a" style="left:852px;top:476px;line-height:21px;color:#3a3a4e">Метод контроля</div>
<div class="a" style="left:1019px;top:476px;line-height:21px;font-size:12px;font-weight:bold;color:#333">3 Расчётный</div>
<div class="a" style="left:828px;top:498px;width:441px;height:16px;background:#fff"></div>
<div class="a" style="left:827px;top:514px;width:442px;height:1px;background:#d4d4d4"></div>
<div class="a" style="left:852px;top:498px;line-height:16px;color:#3a3a4e">Периодичность</div>
<div class="a" style="left:1019px;top:498px;line-height:16px;color:#333">-</div>
<div class="a" style="left:831px;top:515px;line-height:18px;font-size:12px;font-weight:bold;color:#333">Дополнительная характеристика</div>
<svg style="left:1250px;top:521px" width="16" height="8" viewBox="0 0 16 8"><path d="M1.5 7 L8 1 L14.5 7" stroke="#8a8a8a" stroke-width="1.1" fill="none"/></svg>
<div class="a" style="left:827px;top:533px;width:442px;height:1px;background:#d4d4d4"></div>
<div class="a" style="left:828px;top:534px;width:441px;height:16px;background:#fff"></div>
<div class="a" style="left:827px;top:550px;width:442px;height:1px;background:#d4d4d4"></div>
<div class="a" style="left:852px;top:534px;line-height:16px;color:#3a3a4e">Технология</div>
<div class="a" style="left:1019px;top:534px;line-height:16px;color:#333">-</div>
<div class="a" style="left:828px;top:551px;width:441px;height:16px;background:#fff"></div>
<div class="a" style="left:827px;top:567px;width:442px;height:1px;background:#d4d4d4"></div>
<div class="a" style="left:852px;top:551px;line-height:16px;color:#3a3a4e">Обоснование</div>
<div class="a" style="left:1019px;top:551px;line-height:16px;color:#333">-</div>
<div class="a" style="left:806px;top:231px;width:463px;height:1px;background:#d4d4d4"></div>
<div class="a" style="left:806px;top:294px;width:463px;height:1px;background:#d4d4d4"></div>
<div class="a" style="left:806px;top:347px;width:463px;height:1px;background:#d4d4d4"></div>
<div class="a" style="left:806px;top:434px;width:463px;height:1px;background:#d4d4d4"></div>
<div class="a" style="left:806px;top:514px;width:463px;height:1px;background:#d4d4d4"></div>
<div class="a" style="left:806px;top:567px;width:463px;height:1px;background:#d4d4d4"></div>
<div class="a" style="left:827px;top:187px;width:1px;height:380px;background:#d4d4d4"></div>
<div class="a" style="left:1014px;top:188px;width:1px;height:43px;background:#d4d4d4"></div>
<div class="a" style="left:1014px;top:251px;width:1px;height:43px;background:#d4d4d4"></div>
<div class="a" style="left:1014px;top:314px;width:1px;height:33px;background:#d4d4d4"></div>
<div class="a" style="left:1014px;top:367px;width:1px;height:67px;background:#d4d4d4"></div>
<div class="a" style="left:1014px;top:454px;width:1px;height:60px;background:#d4d4d4"></div>
<div class="a" style="left:1014px;top:534px;width:1px;height:33px;background:#d4d4d4"></div>
<div class="a" style="left:827px;top:232px;width:1px;height:18px;background:#f7f7f7"></div>
<div class="a" style="left:827px;top:295px;width:1px;height:18px;background:#f7f7f7"></div>
<div class="a" style="left:827px;top:348px;width:1px;height:18px;background:#f7f7f7"></div>
<div class="a" style="left:827px;top:435px;width:1px;height:18px;background:#f7f7f7"></div>
<div class="a" style="left:827px;top:515px;width:1px;height:18px;background:#f7f7f7"></div>
<div class="a" style="left:0;top:938px;width:1280px;height:22px;background:#f0f0f0;border-top:1px solid #d6d6d6"></div>
<svg style="left:8px;top:939px" width="16" height="20" viewBox="0 0 16 20"><path d="M2.5 2.5 h10 v14 l-5 -5 l-5 5 z" stroke="#1a64b4" stroke-width="1.2" fill="none"/></svg>
<div class="a" style="left:28px;top:940px;line-height:18px;font-size:11px;color:#333">01.01.2026 <span style="color:#4a80c4">|</span> 2026 Мероприятия НМУ</div>
<svg style="left:1240px;top:938px" width="22" height="22" viewBox="0 0 22 22"><path d="M4 16.5 h14 q-2 -2 -2 -5 v-3 q0 -5 -5 -5 q-5 0 -5 5 v3 q0 3 -2 5 z M9 18 q2 2 4 0" stroke="#1a64b4" stroke-width="1.1" fill="none"/></svg>
<div class="a" style="left:1265px;top:940px;line-height:18px;font-size:11px;color:#333">4</div></body></html>
